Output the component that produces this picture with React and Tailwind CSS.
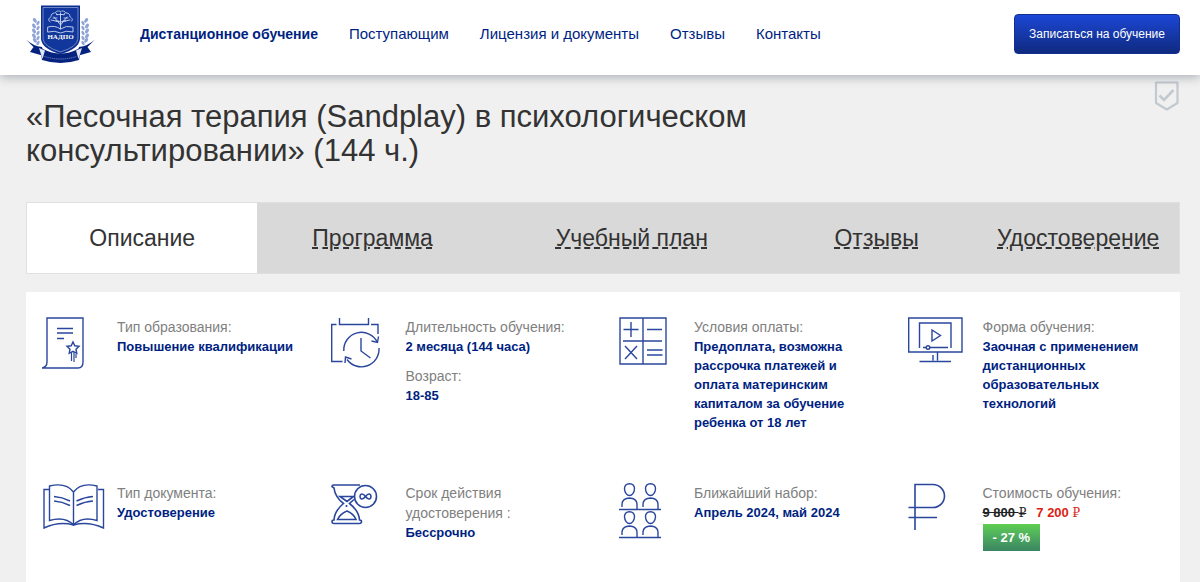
import React from "react";

const NAV = ["Дистанционное обучение", "Поступающим", "Лицензия и документы", "Отзывы", "Контакты"];
const TABS = ["Описание", "Программа", "Учебный план", "Отзывы", "Удостоверение"];

function Logo() {
  return (
    <svg width="70" height="62" viewBox="0 -2 70 62" aria-hidden="true">
      <g fill="#8fa3d6">
        {[0, 1, 2, 3, 4].map((i) => (
          <g key={i}>
            <ellipse cx={9 - (i % 4 === 0 ? 0 : 1)} cy={16 + i * 5} rx="1.6" ry="2.6" transform={`rotate(-35 8 ${16 + i * 5})`} />
            <ellipse cx={12} cy={18 + i * 5} rx="1.3" ry="2.4" transform={`rotate(30 12 ${18 + i * 5})`} />
            <ellipse cx={60 + (i % 4 === 0 ? 0 : 1)} cy={16 + i * 5} rx="1.6" ry="2.6" transform={`rotate(35 61 ${16 + i * 5})`} />
            <ellipse cx={57} cy={18 + i * 5} rx="1.3" ry="2.4" transform={`rotate(-30 57 ${18 + i * 5})`} />
          </g>
        ))}
      </g>
      <path d="M0 34.500 Q7 41 16 42 L18 51 L4 47 L7.500 42 Z M69 34.500 Q62 41 53 42 L51 51 L65 47 L61.500 42 Z" fill="#06227f" />
      <path d="M15 .5 H54 V34 Q53 44 34.500 49 Q16 44 15 34 Z" fill="#0b2c90" />
      <path d="M17 2.500 H52 V34 Q51 42 34.500 47 Q18 42 17 34 Z" fill="#12379c" stroke="#b4c2e6" strokeWidth=".6" />
      <g stroke="#cfd9f2" fill="none" strokeWidth=".9" strokeLinecap="round">
        <path d="M34.500 24 V8 M34.500 20 L28 12 M34.500 20 L41 12 M34.500 17 L25 15 M34.500 17 L44 15 M31 10 L30 8 M38 10 L39 8" />
        <path d="M24 17 Q21 14 25 12 Q25 8 29 8 Q31 5 34.500 6.500 Q38 5 40 8 Q44 8 44 12 Q48 14 45 17" strokeDasharray="1.500 1" />
        <path d="M27 13 h4 M38 13 h4 M31 9.500 h7 M30 16 h3 M37 16 h3" strokeDasharray="1 .8" />
        <path d="M22 22 Q29 20 34.500 24 Q40 20 47 22 V27 Q40 25 34.500 28 Q29 25 22 27 Z" />
      </g>
      <text x="34.5" y="34" textAnchor="middle" fill="#fff" fontSize="7" fontWeight="700" fontFamily="Liberation Serif, serif">НАДПО</text>
      <path d="M14 42 L17 44 Q34.500 53 52 44 L55 42 L53 55 Q34.500 61 16 55 Z" fill="#06227f" />
      <path d="M13 43 L19 45.500 L16.500 54 Z M56 43 L50 45.500 L52.500 54 Z" fill="#dfe5f4" />
      <path d="M18.500 51.500 Q34.500 56.500 50.500 51.500" fill="none" stroke="#6f86c6" strokeWidth="1" strokeDasharray="1.200 .7" />
    </svg>
  );
}

function Icon({ children, w = 64, sw = 1.4 }) {
  return (
    <svg width={w} height="56" viewBox={`0 0 ${w} 56`} fill="none" stroke="#2a479d" strokeWidth={sw} aria-hidden="true">
      {children}
    </svg>
  );
}

const icons = {
  diploma: (
    <Icon>
      <path d="M5 45 V1 H41 V45 Q41 51 36 51 H0 Q5 50 5 45" />
      <path d="M15 11.500 H31 M15 16 H31 M15 21.500 H22" />
      <path d="M31 25 L32.800 28.800 L37 29.300 L34 32.200 L34.800 36.300 L31 34.300 L27.200 36.300 L28 32.200 L25 29.300 L29.200 28.800 Z" />
      <path d="M29.500 35 V44 M32 35 V45 M34 37 V41" strokeWidth="1.2" />
    </Icon>
  ),
  calendar: (
    <Icon>
      <path d="M11.500 44.500 H.7 V7.500 H5.500 M8.500 1 V7.500 H37.500 V1 M40 7.500 H47 V17" />
      <path d="M12.800 34 A17.700 17.700 0 0 1 46.500 25.500 M48 31 A17.700 17.700 0 0 1 16 42.500" />
      <path d="M40.500 24 L46.500 25.500 L47.500 19.500 M14 46 L14.500 40 L20.500 42 M30 21 V34 L39.500 41" />
    </Icon>
  ),
  calculator: (
    <Icon>
      <path d="M1 1 H47 V47 H1 Z M24 1 V47 M4 24 H43" />
      <path d="M12 5 V20 M4.500 12.500 H19.500 M28 12.500 H43 M6 29 L18 42 M18 29 L6 42 M28 33 H43.500 M28 38 H43.500" />
    </Icon>
  ),
  monitor: (
    <Icon>
      <path d="M.7 1 H54 V35 H.7 Z M11.500 31 V6 H43 V31 M25 38 V43.500 M29.500 35 V43.500 M11.500 44.500 H43" />
      <path d="M24 13 V24 L32.500 18.500 Z M15 30.500 H18 M22 30.500 H40" />
      <circle cx="20" cy="30.500" r="1.800" />
    </Icon>
  ),
  book: (
    <Icon>
      <path d="M31.500 9 Q24 -1 7.500 3 V37.500 Q23 33 31.500 42 Q40 33 55 37.500 V3 Q39 -1 31.500 9 V42" />
      <path d="M7 6.500 H2 V45 Q17 38 31.500 42 Q46 38 61.500 45 V6.500 H56" />
      <path d="M12 13.500 Q20 14 28 18 M12 18 Q20 18.500 28 22.500 M51 13.500 Q43 14 34.500 18 M51 18 Q43 18.500 34.500 22.500" />
    </Icon>
  ),
  hourglass: (
    <Icon sw={1.6}>
      <path d="M29 2 H2.500 Q1 2 1 3.500 L3 5 Q4 14 12.500 20.500 Q3.500 28 3 37 Q1 37 1 38.500 Q1 40.500 3 40.500 H28.500 Q30.500 40.500 30.500 38.500 Q30.500 37 28.500 37 Q28 28 18.500 20.500 L23 16.500" />
      <path d="M9 13.500 H22.500 L16 18.500 Z M6.500 36.500 Q9 31 16 28 Q23 31 25 36.500 Z M15.500 22 V24" />
      <circle cx="34.500" cy="13.500" r="11" />
      <path d="M34.500 13.500 C31.500 9.500 29 11 29 13.500 C29 16 31.500 17.500 34.500 13.500 C37.500 9.500 40 11 40 13.500 C40 16 37.500 17.500 34.500 13.500" />
    </Icon>
  ),
  people: (
    <Icon>
      <path d="M0 26.500 H42 M0 54.500 H42" />
      {[0, 28].map((y) =>
        [10.5, 31.5].map((x) => (
          <g key={`${x}-${y}`} transform={`translate(${x} ${y})`}>
            <path d="M0 .7 C3.500 .7 5.200 3 5 6 C4.800 9.500 2.500 12.500 0 12.500 C-2.500 12.500 -4.800 9.500 -5 6 C-5.200 3 -3.500 .7 0 .7 Z" />
            <path d="M-7.500 24 V21.500 Q-7.500 17 -3 15.500 L0 15 L3 15.500 Q7.500 17 7.500 21.500 V26" />
          </g>
        ))
      )}
    </Icon>
  ),
  ruble: (
    <Icon sw={1.6}>
      <path d="M7 47 V1.500 H25 A11.500 11.500 0 0 1 25 24.500 H.5 M.5 34.500 H29" />
    </Icon>
  ),
};

function Fact({ label, value }) {
  return (
    <div>
      <dt className="text-[14px] leading-5 text-[#808080]">{label}</dt>
      <dd className="text-[13px] font-bold leading-[19px] text-[#001f82]">{value}</dd>
    </div>
  );
}

function Cell({ icon, children }) {
  return (
    <div className="grid grid-cols-[75px_1fr] pl-4">
      <div>{icons[icon]}</div>
      <dl className="flex flex-col gap-[10px] pr-4">{children}</dl>
    </div>
  );
}

function Ruble() {
  return <span className="font-['DejaVu_Serif',serif] text-[12px] font-normal">₽</span>;
}

export default function App() {
  return (
    <div className="flex min-h-screen flex-col bg-[#f0f0f0] font-['Liberation_Sans',Arial,sans-serif]">
      <header className="relative flex items-center bg-white pb-[10px] pl-[26px] pr-5 pt-[3px] shadow-[0_2px_10px_rgba(0,20,40,0.3)]">
        <a href="#" aria-label="НАДПО" className="mr-11 block shrink-0">
          <Logo />
        </a>
        <nav className="flex grow items-baseline gap-[31px] text-[15px] leading-5 text-[#001f82]">
          {NAV.map((item, i) => (
            <a key={item} href="#" className={i === 0 ? "text-[14px] font-bold" : ""}>
              {item}
            </a>
          ))}
        </nav>
        <button
          type="button"
          className="rounded-[4px] border border-[#12308f] bg-linear-to-b from-[#1c47d6] to-[#0f2a80] px-[14px] py-[9px] text-[12px] leading-5 text-white"
        >
          Записаться на обучение
        </button>
      </header>

      <main className="flex grow flex-col pl-[26px] pr-5 pt-[6px]">
        <div className="flex items-start justify-between">
          <h1 className="mt-[19px] max-w-[760px] text-[31px] leading-[34px] text-[#333]">
            «Песочная терапия (Sandplay) в психологическом консультировании» (144 ч.)
          </h1>
          <svg width="26" height="30" viewBox="0 0 26 30" fill="none" stroke="#c3c9d0" strokeWidth="2.200" strokeLinejoin="round" aria-hidden="true">
            <path d="M2 1.500 H23.500 V22 L12.800 28.500 L2 22 Z" />
            <path d="M5.500 14.500 L10 19 L19.500 9" strokeWidth="2.600" strokeLinejoin="miter" />
          </svg>
        </div>

        <nav className="mt-[34px] grid grid-cols-[40fr_40fr_50fr_35fr_35fr] border border-[#e0e0e0] bg-[#d9d9d9] text-[23px] leading-7 text-[#333]">
          {TABS.map((tab, i) => (
            <a
              key={tab}
              href="#"
              className={
                i === 0
                  ? "bg-white py-[21px] text-center"
                  : "py-[21px] text-center underline decoration-dashed decoration-2 underline-offset-1"
              }
            >
              {tab}
            </a>
          ))}
        </nav>

        <section className="mt-[18px] grid grow grid-cols-4 content-start gap-y-[51px] bg-white pb-[30px] pt-[25px]">
          <Cell icon="diploma">
            <Fact label="Тип образования:" value="Повышение квалификации" />
          </Cell>
          <Cell icon="calendar">
            <Fact label="Длительность обучения:" value="2 месяца (144 часа)" />
            <Fact label="Возраст:" value="18-85" />
          </Cell>
          <Cell icon="calculator">
            <Fact
              label="Условия оплаты:"
              value="Предоплата, возможна рассрочка платежей и оплата материнским капиталом за обучение ребенка от 18 лет"
            />
          </Cell>
          <Cell icon="monitor">
            <Fact label="Форма обучения:" value="Заочная с применением дистанционных образовательных технологий" />
          </Cell>
          <Cell icon="book">
            <Fact label="Тип документа:" value="Удостоверение" />
          </Cell>
          <Cell icon="hourglass">
            <Fact label="Срок действия удостоверения :" value="Бессрочно" />
          </Cell>
          <Cell icon="people">
            <Fact label="Ближайший набор:" value="Апрель 2024, май 2024" />
          </Cell>
          <Cell icon="ruble">
            <Fact
              label="Стоимость обучения:"
              value={
                <>
                  <span className="flex gap-[10px]">
                    <s className="text-[#222]">
                      9 800 <Ruble />
                    </s>
                    <span className="text-[#dc1e14]">
                      7 200 <Ruble />
                    </span>
                  </span>
                  <span className="mt-px inline-block bg-linear-to-b from-[#5fce52] to-[#3b8562] px-[10px] py-1 text-white">
                    - 27 %
                  </span>
                </>
              }
            />
          </Cell>
        </section>
      </main>
    </div>
  );
}
